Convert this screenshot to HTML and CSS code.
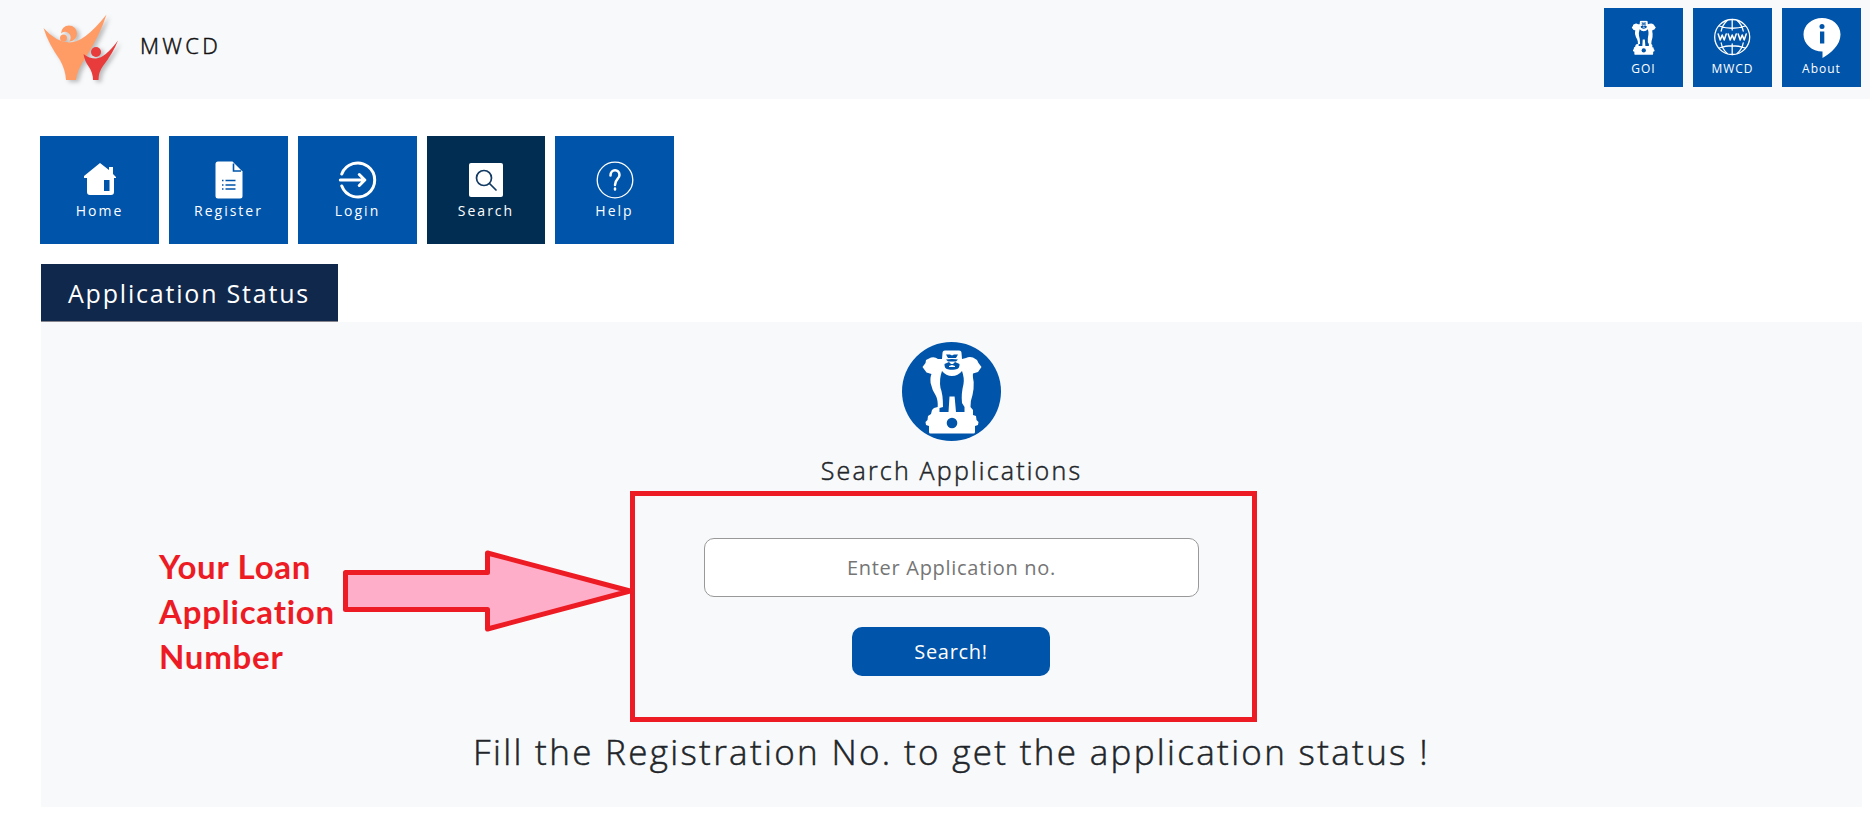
FILE: index.html
```html
<!DOCTYPE html>
<html lang="en">
<head>
<meta charset="utf-8">
<title>MWCD - Application Status</title>
<link rel="stylesheet" href="styles.css">
</head>
<body>
<svg class="defs" width="0" height="0" aria-hidden="true">
  <symbol id="emblem" viewBox="0 0 60 84">
    <path fill="currentColor" d="M20.500 3Q20.500 .5 23 .5H37Q39.500 .5 39.500 3L40 9 44 8Q47 6.500 51 7.500L55 10 56.500 13 59.500 17 56 22 51 23.500Q50.500 26 51.700 32 52 39 50.500 45 48.500 50 48.500 57L51 60V65L54 66 54.500 70 56.500 72 56 75 53 76V82Q53 83.500 51.500 83.500H8.500Q7 83.500 7 82V76L4 75 3.500 72 5.500 70 6 66 9 64 10 60 12 58 15.700 57Q16 50 14 46 10 40 8.600 33 8 27 9.500 24L4.500 22.500.5 17 3.500 13 4 10 9 7.500Q13 6.500 16 9L20 9Z"/>
    <path class="cut" d="M20 21Q24 26 30 26T40 21Q42.500 28 41.500 34 39 44 40 53L42.500 57V62H34L32.600 46.500H27.500L26.500 62H17.500V58L21 57Q21 44 18.500 38 17 29 20 21ZM24 4.500H28L30 5.500 32 4.500H36L34 8H26ZM24 9.500 30 9 36 9.500 34 11.500H26ZM22.500 14 27 12 29 14H31L33 12 37.500 14Q38 19 33 19.500 29 20 27 19.500 22 19 22.500 14Z"/>
    <path fill="currentColor" d="M27 16 30 15 33 16V17H27Z"/>
    <circle class="cut" cx="30" cy="73" r="5.300"/>
  </symbol>
</svg>

<header class="topbar">
  <div class="brand">
    <svg class="brand-logo" width="84" height="76" viewBox="0 0 84 76">
      <g class="logo-adult">
        <path d="M3.500 15Q16 29 29 29.500 44 30 66.500 1.500 60 22 46 44 37 57 36 67H26Q25.500 57 20 47 8 30 3.500 15Z"/>
        <path d="M21 20.500A8 8 0 1 1 29 28.500 5 5 0 0 0 21 20.500Z"/>
        <circle cx="23.500" cy="25" r="3.500"/>
      </g>
      <g class="logo-child">
        <path d="M43.500 41Q49 45.500 56 45.500 65 45 78 27.500 73 40 63 53 58.500 59 58.500 67H53Q53 60 49 54 44.500 48 43.500 41Z"/>
        <circle cx="56" cy="39" r="5"/>
      </g>
    </svg>
    <span class="brand-name">MWCD</span>
  </div>
  <nav class="quick-links">
    <a class="quick-link">
      <svg class="quick-icon" viewBox="0 0 40 42"><use href="#emblem" x="7.500" y="5.500" width="24.500" height="34.500"/></svg>
      <span>GOI</span>
    </a>
    <a class="quick-link">
      <svg class="quick-icon stroked" viewBox="0.8 0 40 42">
        <circle cx="20" cy="22" r="17.500"/>
        <path d="M20 4.500V15M20 29V39.500M15 5.500Q10 10 9 16M25 5.500Q30 10 31 16M9 28Q10 34 15 38.500M31 28Q30 34 25 38.500M7 11Q20 15.500 33 11M7 33Q20 28.500 33 33"/>
        <path class="www" d="M6 19 8 25 10 20 12 25 14 19M16 19 18 25 20 20 22 25 24 19M26 19 28 25 30 20 32 25 34 19"/>
      </svg>
      <span>MWCD</span>
    </a>
    <a class="quick-link">
      <svg class="quick-icon" viewBox="0 0 40 42">
        <path fill="#fff" d="M20 3C30 3 38.500 9.500 38.500 19.500 38.500 30 29 38 20.500 43V36.500C10 36.500 1.500 29 1.500 19.500S10 3 20 3Z"/>
        <circle class="cut" cx="20" cy="11.500" r="2.500"/>
        <path class="cut" d="M18 16.500H22.300V28.500H18Z"/>
      </svg>
      <span>About</span>
    </a>
  </nav>
</header>

<nav class="menu">
  <a class="menu-item">
    <svg class="menu-icon" viewBox="0 0 40 40">
      <path fill="#fff" d="M20 3 29 10V7H33V14L36 17V18H34V32Q34 35 31 35H10Q7 35 7 32V18H4V16Z"/>
      <path class="cut" d="M24 20H29.500V31H24Z"/>
    </svg>
    <span>Home</span>
  </a>
  <a class="menu-item">
    <svg class="menu-icon" viewBox="0 0 40 40">
      <path fill="#fff" d="M9 1.500H23.500L33.500 11.500V36Q33.500 38.500 31 38.500H9Q6.500 38.500 6.500 36V4Q6.500 1.500 9 1.500Z"/>
      <path class="cut-line" d="M24.500 3.500V11H32M16.500 20.500H26.500M16.500 25H26.500M16.500 29H26.500M13 20.500H14.500M13 25H14.500M13 29H14.500"/>
    </svg>
    <span>Register</span>
  </a>
  <a class="menu-item">
    <svg class="menu-icon thick" viewBox="0.7 0 40 40">
      <path d="M4.500 14A17 17 0 1 1 4.500 26M3 20H27M22 14.500 27.500 20 22 25.500"/>
    </svg>
    <span>Login</span>
  </a>
  <a class="menu-item active">
    <svg class="menu-icon" viewBox="0 0 40 40">
      <rect x="3" y="3" width="34" height="34" rx="2" fill="#fff"/>
      <g class="lens"><circle cx="18" cy="18" r="7.500"/><path d="M23.500 23.500 30 30"/></g>
    </svg>
    <span>Search</span>
  </a>
  <a class="menu-item">
    <svg class="menu-icon stroked" viewBox="0 0 40 40">
      <circle cx="20" cy="20" r="17.800"/>
      <path class="mark" d="M15.500 15.500C15.500 8.500 24.500 8.500 24.500 15 24.500 19 20 19 20 25M20 28.500V29.500"/>
    </svg>
    <span>Help</span>
  </a>
</nav>

<main class="status">
  <h1 class="status-tab">Application Status</h1>
  <section class="panel">
    <div class="badge"><svg width="60" height="84"><use href="#emblem"/></svg></div>
    <h2 class="panel-title">Search Applications</h2>
    <form class="search-form">
      <input class="search-input" type="text" placeholder="Enter Application no.">
      <button class="search-button" type="button">Search!</button>
    </form>
    <p class="hint">Fill the Registration No. to get the application status !</p>

    <div class="callout-box"></div>
    <div class="callout-text">Your Loan<br>Application<br>Number</div>
    <svg class="callout-arrow" width="292" height="84" viewBox="0 0 292 84">
      <path d="M3.500 23.500H145.500V4L288 42 145.500 80V60.500H3.500Z"/>
    </svg>
  </section>
</main>
</body>
</html>
```

FILE: styles.css
```css
* {
  box-sizing: border-box;
}

body {
  margin: 0;
  background: #fff;
  color: #212529;
  font-family: "Open Sans", "Noto Sans", sans-serif;
}

.defs {
  position: absolute;
}

.cut {
  fill: #0054a9;
}

.topbar {
  display: flex;
  justify-content: space-between;
  height: 99px;
  padding: 8px 9px 0 40px;
  background: #f8f9fb;
}

.brand {
  display: flex;
  align-items: flex-start;
  padding-top: 5px;
  color: #111;
}

.brand-logo {
  filter: drop-shadow(3px 2px 2px rgba(0, 0, 0, 0.25));
}

.logo-adult {
  fill: #ff9c66;
}

.logo-child {
  fill: #e83b3b;
}

.brand-name,
.panel-title,
.hint {
  font-weight: 300;
  -webkit-text-stroke: 0.5px currentColor;
}

.brand-name {
  margin: 17px 0 0 16px;
  font-size: 22px;
  line-height: 30px;
  letter-spacing: 3.300px;
}

.quick-links {
  display: flex;
  gap: 10px;
}

.quick-link {
  display: flex;
  flex-direction: column;
  align-items: center;
  width: 79px;
  height: 79px;
  padding-top: 7px;
  background: #0054a9;
  color: #fff;
  font-size: 12px;
  line-height: 16px;
  letter-spacing: 1px;
}

.quick-link span {
  margin-top: 4px;
}

.quick-icon {
  width: 40px;
  height: 42px;
  overflow: visible;
}

.stroked,
.thick,
.lens {
  fill: none;
  stroke: #fff;
  stroke-width: 1.300;
  stroke-linecap: round;
  stroke-linejoin: round;
}

.www {
  stroke-width: 1.500;
}

.menu {
  display: flex;
  gap: 10px;
  padding: 37px 0 0 40px;
}

.menu-item {
  display: flex;
  flex-direction: column;
  align-items: center;
  width: 119px;
  height: 108px;
  padding-top: 24px;
  background: #0054a9;
  color: #fff;
  font-size: 14px;
  line-height: 20px;
  letter-spacing: 2px;
}

.menu-item.active {
  width: 118px;
  background: #022d52;
}

.menu-item span {
  margin-top: 1px;
}

.menu-icon {
  width: 40px;
  height: 40px;
}

.cut-line {
  fill: none;
  stroke: #0054a9;
  stroke-width: 1.600;
}

.thick {
  stroke-width: 3;
}

.lens {
  stroke: #123a63;
  stroke-width: 1.700;
}

.mark {
  stroke-width: 2.500;
}

.status {
  padding: 20px 8px 0 41px;
}

.status-tab {
  width: 297px;
  height: 58px;
  margin: 0;
  padding-left: 27px;
  border-bottom: 1px solid #85858d;
  background: #10284b;
  color: #fff;
  font-size: 25px;
  font-weight: 400;
  line-height: 59px;
  letter-spacing: 1.800px;
  white-space: nowrap;
}

.panel {
  position: relative;
  display: flex;
  flex-direction: column;
  align-items: center;
  height: 485px;
  padding-top: 20px;
  background: #f8f9fb;
}

.badge {
  display: flex;
  align-items: center;
  justify-content: center;
  width: 99px;
  height: 99px;
  border-radius: 50%;
  background: #0054a9;
  color: #fff;
}

.panel-title {
  margin: 12px 0 0;
  font-size: 25px;
  line-height: 34px;
  letter-spacing: 2.200px;
}

.search-form {
  display: flex;
  flex-direction: column;
  align-items: center;
  gap: 30px;
  margin-top: 51px;
}

.search-input,
.search-button {
  border-radius: 10px;
  font-family: inherit;
  font-size: 20px;
  letter-spacing: 0.700px;
  text-align: center;
}

.search-input {
  width: 495px;
  height: 59px;
  border: 1px solid #999;
  background: #fff;
}

.search-input::placeholder {
  color: #757575;
}

.search-button {
  width: 198px;
  height: 49px;
  margin-right: 1px;
  border: 0;
  background: #0054a9;
  color: #fff;
}

.hint {
  margin: 52px 0 0;
  font-size: 35px;
  line-height: 48px;
  letter-spacing: 2.320px;
  white-space: nowrap;
}

.callout-box {
  position: absolute;
  left: 589px;
  top: 169px;
  width: 627px;
  height: 231px;
  border: 5px solid #ed1c24;
  pointer-events: none;
}

.callout-text {
  position: absolute;
  left: 118px;
  top: 222px;
  color: #ed1c24;
  font-family: Lato, sans-serif;
  font-size: 33px;
  font-weight: 700;
  line-height: 45px;
  letter-spacing: 0.750px;
}

.callout-arrow {
  position: absolute;
  left: 301px;
  top: 227px;
  fill: #ffaec9;
  stroke: #ed1c24;
  stroke-width: 5;
  stroke-linejoin: round;
}
```
